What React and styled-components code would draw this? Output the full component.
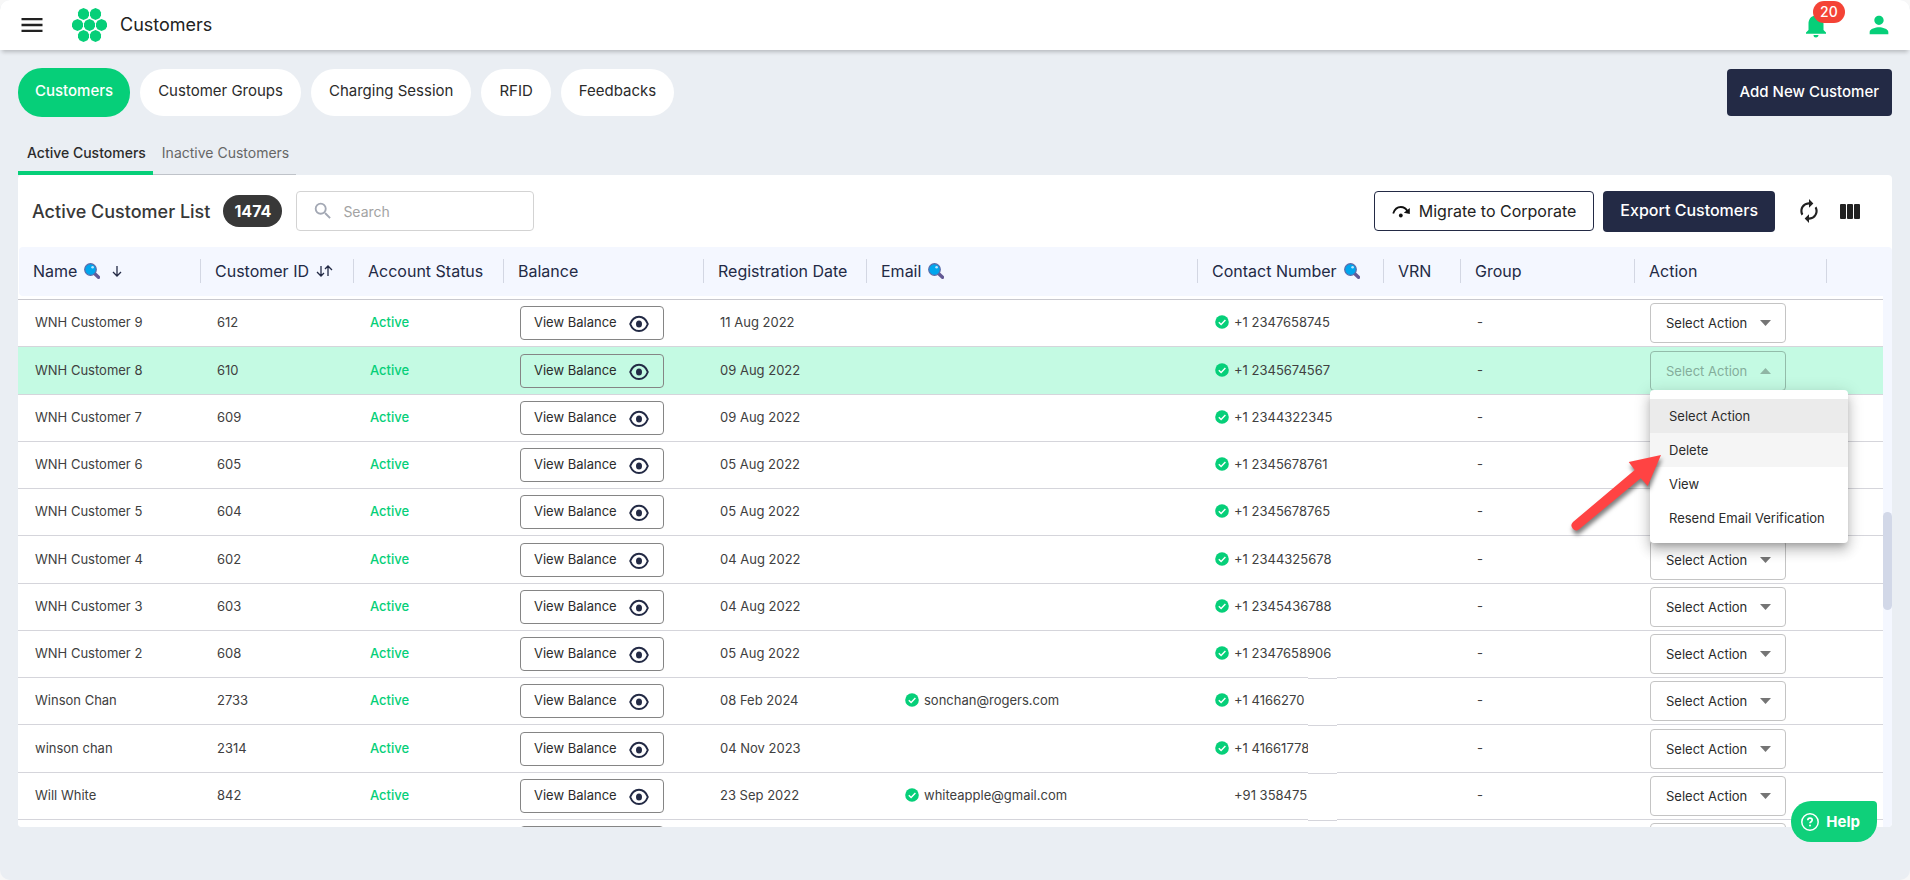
import React from 'react';
import styled, { createGlobalStyle } from 'styled-components';
import { MdAutorenew, MdMenu, MdNotifications, MdPerson, MdSearch } from 'react-icons/md';

// --- 1. Data ---
const sections = ['Customers', 'Customer Groups', 'Charging Session', 'RFID', 'Feedbacks'];

const columns = [
  { label: 'Name', width: 183, search: true, sort: 'down' },
  { label: 'Customer ID', width: 153, sort: 'both' },
  { label: 'Account Status', width: 150 },
  { label: 'Balance', width: 200 },
  { label: 'Registration Date', width: 163 },
  { label: 'Email', search: true }, // takes the space that is left
  { label: 'Contact Number', width: 186, search: true },
  { label: 'VRN', width: 77 },
  { label: 'Group', width: 174 },
  { label: 'Action', width: 192 },
  { label: '', width: 56 },
];

const customers = [
  { id: 612, name: 'WNH Customer 9', date: '11 Aug 2022', phone: '+1 2347658745', verified: true },
  { id: 610, name: 'WNH Customer 8', date: '09 Aug 2022', phone: '+1 2345674567', verified: true, open: true },
  { id: 609, name: 'WNH Customer 7', date: '09 Aug 2022', phone: '+1 2344322345', verified: true },
  { id: 605, name: 'WNH Customer 6', date: '05 Aug 2022', phone: '+1 2345678761', verified: true },
  { id: 604, name: 'WNH Customer 5', date: '05 Aug 2022', phone: '+1 2345678765', verified: true },
  { id: 602, name: 'WNH Customer 4', date: '04 Aug 2022', phone: '+1 2344325678', verified: true },
  { id: 603, name: 'WNH Customer 3', date: '04 Aug 2022', phone: '+1 2345436788', verified: true },
  { id: 608, name: 'WNH Customer 2', date: '05 Aug 2022', phone: '+1 2347658906', verified: true },
  { id: 2733, name: 'Winson Chan', date: '08 Feb 2024', email: 'sonchan@rogers.com', phone: '+1 4166270', verified: true, masked: true },
  { id: 2314, name: 'winson chan', date: '04 Nov 2023', phone: '+1 41661778', verified: true, masked: true },
  { id: 842, name: 'Will White', date: '23 Sep 2022', email: 'whiteapple@gmail.com', phone: '+91 358475', masked: true },
];

const actions = ['Select Action', 'Delete', 'View', 'Resend Email Verification'];

// --- 2. Styled Components ---
const GlobalStyle = createGlobalStyle`
  * {
    box-sizing: border-box;
  }

  body {
    margin: 0;
    background: #f7f7f7;
    font-family: Inter, 'Liberation Sans', sans-serif;
    font-size: 14px;
    color: #383838;
  }

  button, input, select {
    font: inherit;
    color: inherit;
  }

  button {
    padding: 0;
    border: 0;
    background: none;
    cursor: pointer;
  }
`;

const Page = styled.div`
  min-height: 100vh;
  border-radius: 10px;
  overflow: hidden;
  background: #eaeef3;
`;

const Header = styled.header`
  display: flex;
  align-items: center;
  height: 50px;
  padding: 0 17px 0 18px;
  background: #fff;
  box-shadow: 0 4px 4px -2px rgba(0, 0, 0, 0.22);
`;

const IconButton = styled.button`
  display: flex;
  position: relative;
  color: ${props => props.$color || '#222'};
`;

const Logo = styled.svg`
  margin-left: 26px;
`;

const HeaderTitle = styled.h1`
  flex: 1;
  margin: 0 0 0 13px;
  padding-bottom: 1px;
  font-size: 18px;
  font-weight: 400;
  color: #222;
`;

const HeaderIcons = styled.div`
  display: flex;
  align-items: center;
  gap: 34px;
`;

const NotificationCount = styled.span`
  position: absolute;
  left: 12px;
  top: -9px;
  padding: 0 7px;
  border-radius: 11px;
  background: #f44336;
  color: #fff;
  font-weight: 500;
  line-height: 22px;
`;

const Content = styled.main`
  padding: 18px 18px 0;
`;

const SectionBar = styled.div`
  display: flex;
  align-items: center;
  justify-content: space-between;
  height: 49px;
`;

const Sections = styled.nav`
  display: flex;
  align-items: center;
  gap: 10px;
`;

const SectionLink = styled.a`
  height: ${props => (props.$active ? 49 : 47)}px;
  padding: ${props => (props.$active ? '1px 17px 0' : '0 18px')};
  border-radius: 24px;
  background: ${props => (props.$active ? '#06cf79' : '#fff')};
  color: ${props => (props.$active ? '#fff' : '#2b2b2b')};
  font-size: 15px;
  font-weight: ${props => (props.$active ? 500 : 400)};
  line-height: 44px;
  text-decoration: none;
`;

const DarkButton = styled.button`
  height: ${props => (props.$tall ? 47 : 41)}px;
  padding: ${props => (props.$tall ? '0 13px 3px' : '0 17px 2px')};
  border-radius: 4px;
  background: #232a45;
  color: #fff;
  font-size: ${props => (props.$tall ? 15 : 16)}px;
  font-weight: 500;
`;

const Tabs = styled.div`
  display: flex;
  margin-top: 18px;
`;

const Tab = styled.button`
  height: 40px;
  padding: 0 7px ${props => (props.$active ? 2 : 4)}px 9px;
  border-bottom: ${props => (props.$active ? '4px solid #06cf79' : '1px solid #bfc3c9')};
  color: ${props => (props.$active ? '#2b2b2b' : '#666')};
  font-weight: ${props => (props.$active ? 500 : 400)};
`;

const Card = styled.section`
  border-radius: 4px;
  overflow: hidden;
  background: #fff;
`;

const Toolbar = styled.div`
  display: flex;
  align-items: center;
  height: 72px;
  padding: 0 32px 0 14px;
`;

const ListTitle = styled.h2`
  margin: 0;
  font-size: 18px;
  font-weight: 500;
  color: #383838;
`;

const Count = styled.span`
  margin-left: 13px;
  padding: 0 11px;
  border-radius: 16px;
  background: #383838;
  color: #fff;
  font-size: 16px;
  font-weight: 700;
  line-height: 32px;
`;

const SearchBox = styled.label`
  display: flex;
  align-items: center;
  gap: 9px;
  width: 238px;
  height: 40px;
  margin-left: 14px;
  padding: 0 14px 0 15px;
  border: 1px solid #d3d3d3;
  border-radius: 4px;
  color: #a3a8b4;
`;

const SearchInput = styled.input`
  flex: 1;
  min-width: 0;
  padding: 0;
  border: 0;
  outline: 0;
  background: none;

  &::placeholder {
    color: #a3a3a3;
  }
`;

const ToolbarActions = styled.div`
  display: flex;
  align-items: center;
  margin-left: auto;
`;

const OutlineButton = styled.button`
  display: flex;
  align-items: center;
  gap: 8px;
  height: 40px;
  margin-right: 9px;
  padding: 0 17px 1px;
  border: 1px solid #232a45;
  border-radius: 4px;
  color: #222;
  font-size: 16px;
`;

const ToolIcons = styled.div`
  display: flex;
  align-items: center;
  gap: 18px;
  margin-left: 21px;
`;

// The list fills the window below the toolbar, its last row runs off the end
const ListArea = styled.div`
  display: flex;
  height: calc(100vh - 300px);
`;

const TableViewport = styled.div`
  flex: 1;
  min-width: 0;
  overflow: hidden;
`;

const ScrollTrack = styled.div`
  display: flex;
  flex-direction: column;
  width: 9px;
  background: #f4f7ff;
  border-radius: 0 4px 4px 0;

  &::before {
    content: '';
    flex: 265;
  }

  &::after {
    content: '';
    flex: 217;
  }
`;

const ScrollThumb = styled.div`
  flex: 98;
  border-radius: 5px;
  background: #d2d8e8;
`;

const Table = styled.table`
  width: 100%;
  table-layout: fixed;
  border-spacing: 0;
`;

const HeadCell = styled.th`
  padding: 0;
  border-bottom: 1px solid #c9c9cf;
  font-weight: 400;
`;

const HeadContent = styled.div`
  display: flex;
  align-items: center;
  gap: 7px;
  position: relative;
  height: 49px;
  margin-bottom: 3px;
  padding: 0 0 2px 14px;
  background: #f4f7ff;
  color: #232a45;
  font-size: 16px;
  white-space: nowrap;

  ${HeadCell}:first-child & {
    margin-left: 1px;
    border-radius: 4px 0 0 4px;
  }

  ${HeadCell}:not(:last-child) &::after {
    content: '';
    position: absolute;
    right: 0;
    top: 12px;
    width: 1px;
    height: 24px;
    background: #d3d7e3;
  }
`;

const Row = styled.tr`
  height: 47px;
  background: ${props => (props.$selected ? '#c4fae3' : '#fff')};

  &:nth-child(4n + 2) {
    height: 48px;
  }
`;

const Cell = styled.td`
  position: relative;
  padding: 0 0 ${props => (props.$control ? 0 : 2)}px ${props => props.$indent || 16}px;
  border-bottom: 1px solid #d5d5db;
  color: ${props => (props.$active ? '#06cf79' : '#404040')};
  font-size: 13px;
  font-weight: ${props => (props.$active ? 500 : 400)};
  white-space: nowrap;
`;

const BalanceButton = styled.button`
  display: flex;
  align-items: center;
  gap: 12px;
  width: 144px;
  height: 34px;
  padding: 0 13px 2px;
  border: 1px solid #858585;
  border-radius: 4px;
  color: #2b2b2b;

  svg {
    margin-top: 3px;
  }
`;

const Verified = styled.span`
  display: flex;
  align-items: center;
  gap: 5px;
`;

const IconSlot = styled.span`
  display: flex;
  width: 14px;
`;

// Covers the last digits of a number
const Mask = styled.span`
  position: absolute;
  left: 110px;
  top: -1px;
  bottom: -1px;
  width: 29px;
  background: linear-gradient(#fff 1px, #d5d5db 1px, #d5d5db 2px, #fff 2px);
`;

const SelectWrap = styled.div`
  display: grid;
  grid-template-columns: 100%;
  align-items: center;
  position: relative;
  width: 136px;
  height: 40px;
  color: ${props => (props.$open ? '#84ad9b' : '#2b2b2b')};
`;

const Select = styled.select`
  grid-area: 1 / 1;
  width: 100%;
  height: 40px;
  padding: 0 30px 0 15px;
  border: 1px solid ${props => (props.$open ? '#93bcaa' : '#c4c4c4')};
  border-radius: 4px;
  outline: 0;
  background: none;
  appearance: none;
`;

const Caret = styled.svg`
  grid-area: 1 / 1;
  justify-self: end;
  margin-right: 15px;
  pointer-events: none;
`;

const Menu = styled.ul`
  position: absolute;
  z-index: 2;
  left: 0;
  top: 39px;
  width: 198px;
  margin: 0;
  padding: 9px 0 8px;
  border-radius: 4px;
  background: #fff;
  box-shadow: 0 5px 6px -3px rgba(0, 0, 0, 0.22), 0 8px 12px 1px rgba(0, 0, 0, 0.14),
    0 3px 16px 2px rgba(0, 0, 0, 0.12);
  list-style: none;
`;

const MenuItem = styled.button`
  display: block;
  width: 100%;
  height: 34px;
  padding: 0 19px;
  background: ${props => props.$background || 'transparent'};
  color: #2b2b2b;
  text-align: left;
`;

const Pointer = styled.svg`
  position: absolute;
  z-index: 3;
  left: -90px;
  top: 94px;
  filter: drop-shadow(1px 4px 2px rgba(0, 0, 0, 0.5));
  pointer-events: none;
`;

const HelpButton = styled.button`
  display: flex;
  align-items: center;
  gap: 7px;
  position: fixed;
  right: 33px;
  bottom: 38px;
  z-index: 4;
  height: 41px;
  padding: 0 17px 0 10px;
  border-radius: 20px 4px 20px 20px;
  background: #0fd07a;
  color: #fff;
  font-size: 15px;
  font-weight: 700;
`;

// --- 3. Icons ---
const hexCenters = [[11.5, 6], [23.5, 6], [5.5, 17], [17.5, 17], [29.5, 17], [11.5, 28], [23.5, 28]];

function HexLogo() {
  return (
    <Logo width="35" height="34" viewBox="0 0 35 34" fill="#06cf79" aria-hidden="true">
      {hexCenters.map(([x, y]) => (
        <path
          key={`${x}-${y}`}
          d={`M${x} ${y - 6}l4 1.8 1.5 2.7v3l-1.5 2.7-4 1.8-4-1.8-1.5-2.7v-3l1.5-2.7z`}
        />
      ))}
    </Logo>
  );
}

function MagnifierIcon() {
  return (
    <svg width="16" height="16" viewBox="0 0 16 16" aria-hidden="true">
      <path d="M10.5 10.5l4 3.8" stroke="#635994" strokeWidth="3.4" strokeLinecap="round" />
      <circle cx="6.5" cy="6.5" r="5.8" fill="#00a6ed" stroke="#5c6aa8" strokeWidth="1.2" />
      <circle cx="8.6" cy="4.2" r="1.3" fill="#b9e6ff" />
    </svg>
  );
}

function SortIcon({ both }) {
  if (both) {
    return (
      <svg width="17" height="12" viewBox="0 0 17 12" fill="none" stroke="#232a45" strokeWidth="1.3" aria-hidden="true">
        <path d="M5 1v9.5M1 7l4 4 3-3M12 11V1.5M9 4l3-3 4 4" />
      </svg>
    );
  }
  return (
    <svg width="16" height="12" viewBox="-5 0 16 12" fill="none" stroke="#232a45" strokeWidth="1.3" aria-hidden="true">
      <path d="M5 1v9.5M1 7l4 4 4-4" />
    </svg>
  );
}

function EyeIcon() {
  return (
    <svg width="20" height="17" viewBox="0 0 20 17" aria-hidden="true">
      <path
        d="M1.2 9C3 4.2 6.2 1.8 10 1.8S17 4.2 18.8 9C17 13.7 13.8 16 10 16S3 13.7 1.2 9z"
        fill="none"
        stroke="#232a45"
        strokeWidth="2"
        strokeLinejoin="round"
      />
      <ellipse cx="10" cy="9" rx="3" ry="3.5" fill="#232a45" />
    </svg>
  );
}

function CheckIcon() {
  return (
    <svg width="14" height="14" viewBox="0 0 14 14" aria-hidden="true">
      <circle cx="7" cy="7" r="6.8" fill="#06cf79" />
      <path d="M3.8 7.2l2.3 2.3 4.3-4.6" fill="none" stroke="#fff" strokeWidth="1.4" />
    </svg>
  );
}

function StepOverIcon() {
  return (
    <svg width="19" height="14" viewBox="0 0 19 14" aria-hidden="true">
      <path d="M1.2 9.5C2.5 5.5 5.3 3 8.8 3c3 0 5.3 1.5 6.8 4.5" fill="none" stroke="#111" strokeWidth="1.8" />
      <path d="M17.8 4v6l-6-1.2z" fill="#111" />
      <circle cx="8.8" cy="11.5" r="1.9" fill="#111" />
    </svg>
  );
}

function ColumnsIcon() {
  return (
    <svg width="20" height="15" viewBox="0 0 20 15" fill="#222" aria-hidden="true">
      <rect width="6" height="15" rx="1" />
      <rect x="7" width="6" height="15" rx="1" />
      <rect x="14" width="6" height="15" rx="1" />
    </svg>
  );
}

function HelpIcon() {
  return (
    <svg width="18" height="18" viewBox="0 0 18 18" fill="none" stroke="#fff" aria-hidden="true">
      <circle cx="9" cy="9" r="8.2" strokeWidth="1.5" />
      <path d="M6.8 7.2c0-1.3 1-2.1 2.2-2.1s2.2.8 2.2 2c0 1.6-2.2 1.6-2.2 3.2" strokeWidth="1.7" />
      <circle cx="9" cy="12.5" r="1" fill="#fff" stroke="none" />
    </svg>
  );
}

// --- 4. Table parts ---
function ActionSelect({ name, open }) {
  return (
    <SelectWrap $open={open}>
      <Select $open={open} aria-label={`Action for ${name}`} defaultValue={actions[0]}>
        {actions.map((action) => (
          <option key={action}>{action}</option>
        ))}
      </Select>
      <Caret width="11" height="6" viewBox="0 0 11 6" fill={open ? '#8fb5a4' : '#757575'} aria-hidden="true">
        <path d={open ? 'M0 6l5.5-6L11 6z' : 'M0 0l5.5 6L11 0z'} />
      </Caret>
      {open && (
        <>
          <Menu>
            {actions.map((action, index) => (
              <li key={action}>
                <MenuItem type="button" $background={['#ebebeb', '#f5f5f5'][index]}>{action}</MenuItem>
              </li>
            ))}
          </Menu>
          <Pointer width="110" height="90" viewBox="0 0 110 90" fill="#ff4343" aria-hidden="true">
            <path d="M101 10L68.7 17l6 8L13 77a4.8 4.8 0 0 0 6.2 7.3l61.5-51 7 7.7z" />
          </Pointer>
        </>
      )}
    </SelectWrap>
  );
}

function CustomerRow({ customer }) {
  return (
    <Row $selected={customer.open}>
      <Cell $indent={17}>{customer.name}</Cell>
      <Cell>{customer.id}</Cell>
      <Cell $active>Active</Cell>
      <Cell $control>
        <BalanceButton type="button">
          View Balance
          <EyeIcon />
        </BalanceButton>
      </Cell>
      <Cell>{customer.date}</Cell>
      <Cell $indent={38}>
        {customer.email && (
          <Verified>
            <IconSlot><CheckIcon /></IconSlot>
            {customer.email}
          </Verified>
        )}
      </Cell>
      <Cell $indent={17}>
        <Verified>
          <IconSlot>{customer.verified && <CheckIcon />}</IconSlot>
          {customer.phone}
        </Verified>
        {customer.masked && <Mask />}
      </Cell>
      <Cell />
      <Cell>-</Cell>
      <Cell $control $indent={15}>
        <ActionSelect name={customer.name} open={customer.open} />
      </Cell>
      <Cell />
    </Row>
  );
}

// Only the top edge of the next row's controls shows above the fold
function NextRow() {
  return (
    <Row aria-hidden="true">
      <Cell colSpan={3} />
      <Cell $control><BalanceButton as="div" /></Cell>
      <Cell colSpan={2} />
      <Cell><Mask /></Cell>
      <Cell colSpan={2} />
      <Cell $control $indent={15}><SelectWrap><Select as="div" /></SelectWrap></Cell>
      <Cell />
    </Row>
  );
}

// --- 5. Page ---
function App() {
  return (
    <Page>
      <GlobalStyle />
      <Header>
        <IconButton type="button" aria-label="Menu"><MdMenu size={28} /></IconButton>
        <HexLogo />
        <HeaderTitle>Customers</HeaderTitle>
        <HeaderIcons>
          <IconButton type="button" $color="#06cf79" aria-label="Notifications">
            <MdNotifications size={30} />
            <NotificationCount>20</NotificationCount>
          </IconButton>
          <IconButton type="button" $color="#06cf79" aria-label="Account"><MdPerson size={28} /></IconButton>
        </HeaderIcons>
      </Header>
      <Content>
        <SectionBar>
          <Sections>
            {sections.map((section, index) => (
              <SectionLink key={section} href="#" $active={index === 0}>{section}</SectionLink>
            ))}
          </Sections>
          <DarkButton type="button" $tall>Add New Customer</DarkButton>
        </SectionBar>
        <Tabs>
          <Tab type="button" $active>Active Customers</Tab>
          <Tab type="button">Inactive Customers</Tab>
        </Tabs>
        <Card>
          <Toolbar>
            <ListTitle>Active Customer List</ListTitle>
            <Count>1474</Count>
            <SearchBox>
              <MdSearch size={22} />
              <SearchInput type="text" placeholder="Search" aria-label="Search" />
            </SearchBox>
            <ToolbarActions>
              <OutlineButton type="button">
                <StepOverIcon />
                Migrate to Corporate
              </OutlineButton>
              <DarkButton type="button">Export Customers</DarkButton>
              <ToolIcons>
                <IconButton type="button" aria-label="Refresh"><MdAutorenew size={26} /></IconButton>
                <IconButton type="button" aria-label="Columns"><ColumnsIcon /></IconButton>
              </ToolIcons>
            </ToolbarActions>
          </Toolbar>
          <ListArea>
            <TableViewport>
              <Table>
                <colgroup>
                  {columns.map((column) => (
                    <col key={column.label} width={column.width} />
                  ))}
                </colgroup>
                <thead>
                  <tr>
                    {columns.map((column) => (
                      <HeadCell key={column.label}>
                        <HeadContent>
                          {column.label}
                          {column.search && <MagnifierIcon />}
                          {column.sort && <SortIcon both={column.sort === 'both'} />}
                        </HeadContent>
                      </HeadCell>
                    ))}
                  </tr>
                </thead>
                <tbody>
                  {customers.map((customer) => (
                    <CustomerRow key={customer.id} customer={customer} />
                  ))}
                  <NextRow />
                </tbody>
              </Table>
            </TableViewport>
            <ScrollTrack>
              <ScrollThumb />
            </ScrollTrack>
          </ListArea>
        </Card>
      </Content>
      <HelpButton type="button">
        <HelpIcon />
        Help
      </HelpButton>
    </Page>
  );
}

export default App;
